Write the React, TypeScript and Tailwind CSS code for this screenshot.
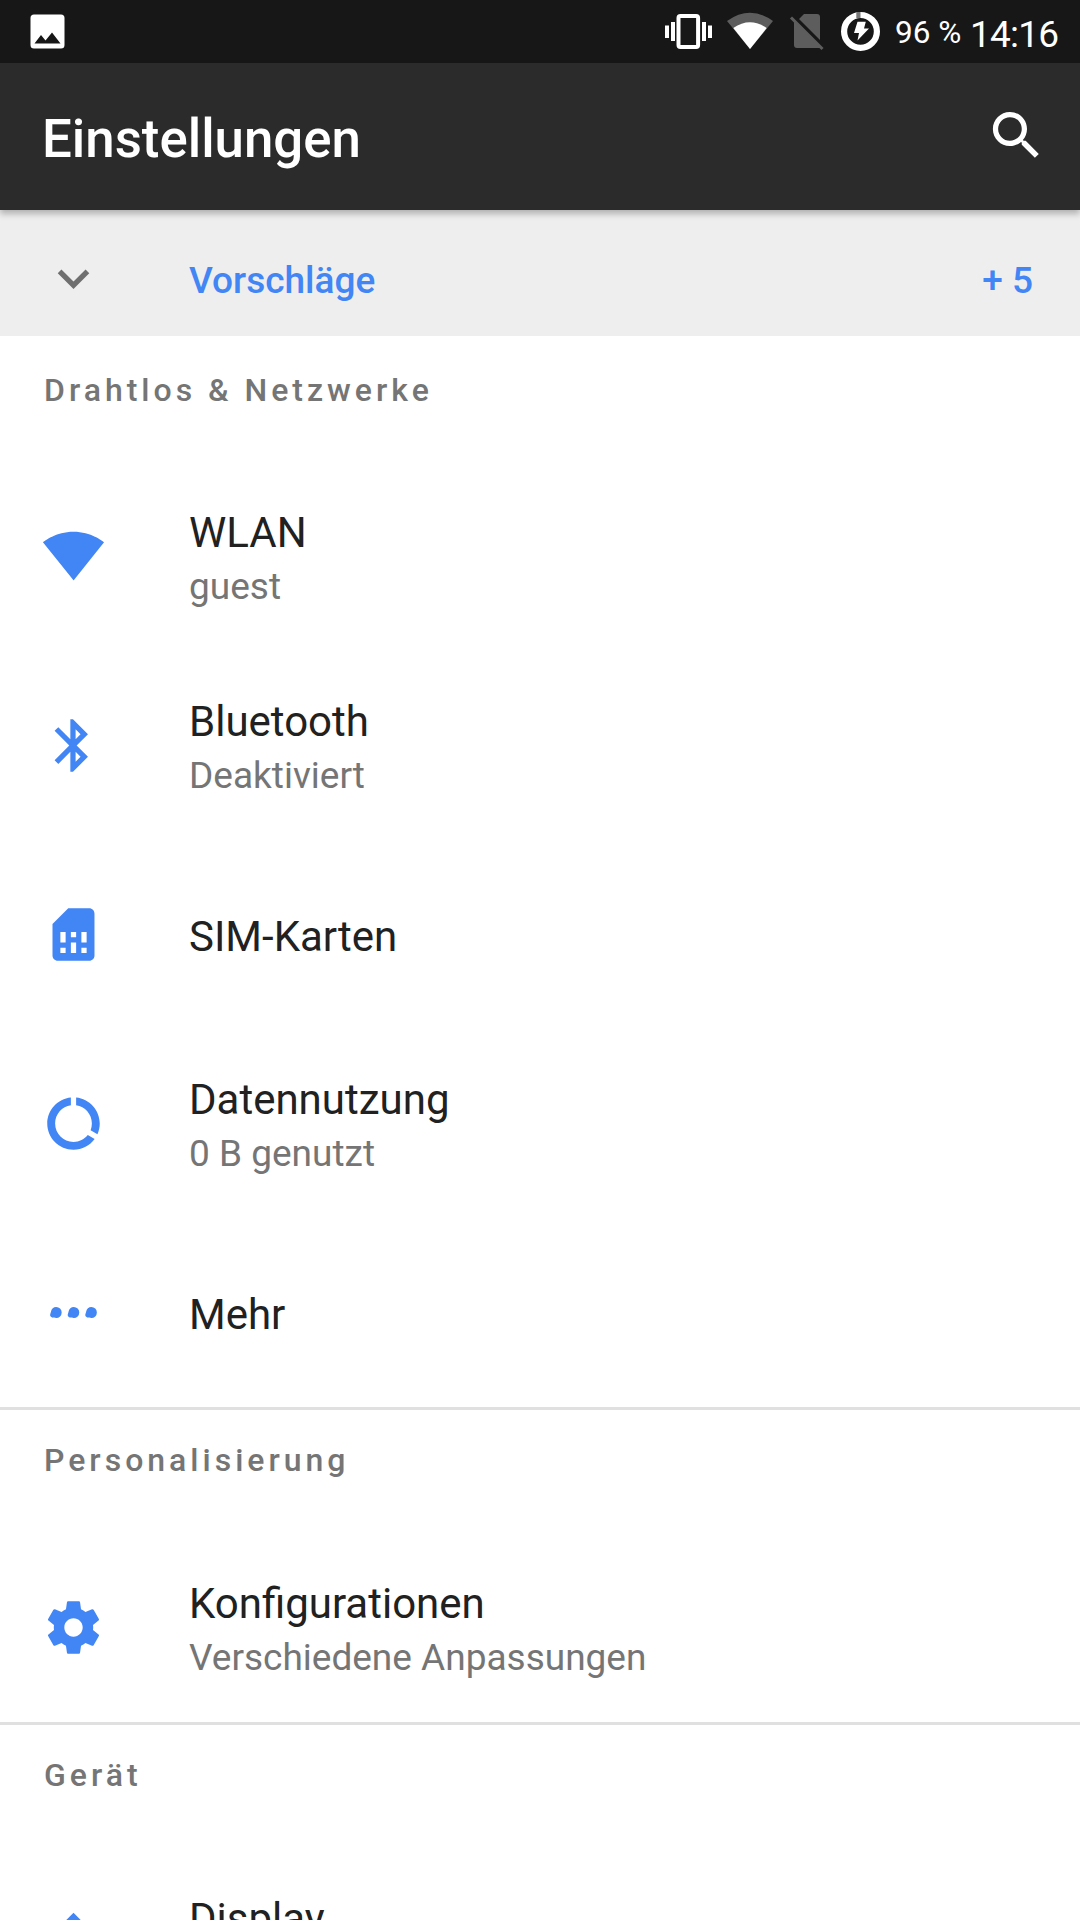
import type { ReactNode } from "react";

type IconProps = { d: string; className?: string };

function Icon({ d, className = "text-[#4285f4]" }: IconProps) {
  return (
    <svg viewBox="0 0 24 24" className={`size-[63px] shrink-0 ${className}`} fill="currentColor">
      <path d={d} />
    </svg>
  );
}

const paths = {
  search:
    "M15.5 14h-.79l-.28-.27C15.41 12.59 16 11.11 16 9.5 16 5.91 13.09 3 9.5 3S3 5.91 3 9.5 5.91 16 9.5 16c1.61 0 3.09-.59 4.23-1.57l.27.28v.79l5 4.99L20.49 19l-4.99-5zm-6 0C7.01 14 5 11.99 5 9.5S7.01 5 9.5 5 14 7.01 14 9.5 11.99 14 9.5 14z",
  expand: "M16.59 8.59L12 13.17 7.41 8.59 6 10l6 6 6-6z",
  wifi: "M12.01 21.1L23.64 6.6c-.45-.34-4.93-4-11.64-4C5.28 2.6.81 6.26.36 6.6l11.63 14.49.01.01.01-.01z",
  bluetooth:
    "M17.51 7.71L11.8 2h-1v7.59L6.21 5 4.8 6.41 10.39 12 4.8 17.59 6.21 19 10.8 14.41V22h1l5.71-5.71-4.3-4.29 4.3-4.29zM12.8 5.83l1.88 1.88L12.8 9.59V5.83zm1.88 10.46L12.8 18.17v-3.76l1.88 1.88z",
  sim: "M19.99 4c0-1.1-.89-2-1.99-2h-8L4 8v12c0 1.1.9 2 2 2h12.01c1.1 0 1.99-.9 1.99-2l-.01-16zM9 19H7v-2h2v2zm8 0h-2v-2h2v2zm-8-4H7v-4h2v4zm4 4h-2v-4h2v4zm0-6h-2v-2h2v2zm4 2h-2v-4h2v4z",
  data: "M13 2.05v3.03c3.39.49 6 3.39 6 6.92 0 .9-.18 1.75-.48 2.54l2.6 1.53c.56-1.24.88-2.62.88-4.07 0-5.18-3.95-9.45-9-9.95zM12 19c-3.87 0-7-3.13-7-7 0-3.53 2.61-6.43 6-6.92V2.05c-5.06.5-9 4.76-9 9.95 0 5.52 4.47 10 9.99 10 3.31 0 6.24-1.61 8.06-4.09l-2.6-1.53C16.17 17.98 14.21 19 12 19z",
  more: "M5.4 9.9a2.1 2.1 0 1 1 0 4.2c-1 0-2.3-.1-2.3-1.1 0-.5.2-.8.3-1.3.2-1.1 1-1.8 2-1.8zM12.1 9.9a2.1 2.1 0 1 1 0 4.2c-1 0-2.3-.1-2.3-1.1 0-.5.2-.8.3-1.3.2-1.1 1-1.8 2-1.8zM18.8 9.9a2.1 2.1 0 1 1 0 4.2c-1 0-2.3-.1-2.3-1.1 0-.5.2-.8.3-1.3.2-1.1 1-1.8 2-1.8z",
  settings:
    "M19.43 12.98c.04-.32.07-.64.07-.98s-.03-.66-.07-.98l2.11-1.65c.19-.15.24-.42.12-.64l-2-3.46c-.12-.22-.39-.3-.61-.22l-2.49 1c-.52-.4-1.08-.73-1.69-.98l-.38-2.65C14.46 2.18 14.25 2 14 2h-4c-.25 0-.46.18-.49.42l-.38 2.65c-.61.25-1.17.59-1.69.98l-2.49-1c-.23-.09-.49 0-.61.22l-2 3.46c-.13.22-.07.49.12.64l2.11 1.65c-.04.32-.07.65-.07.98s.03.66.07.98l-2.11 1.65c-.19.15-.24.42-.12.64l2 3.46c.12.22.39.3.61.22l2.49-1c.52.4 1.08.73 1.69.98l.38 2.65c.03.24.24.42.49.42h4c.25 0 .46-.18.49-.42l.38-2.65c.61-.25 1.17-.59 1.69-.98l2.49 1c.23.09.49 0 .61-.22l2-3.46c.12-.22.07-.49-.12-.64l-2.11-1.65zM12 15.5c-1.93 0-3.5-1.57-3.5-3.5s1.57-3.5 3.5-3.5 3.5 1.57 3.5 3.5-1.57 3.5-3.5 3.5z",
  display:
    "M20 15.31L23.31 12 20 8.69V4h-4.69L12 .69 8.69 4H4v4.69L.69 12 4 15.31V20h4.69L12 23.31 15.31 20H20v-4.69zM12 18c-3.31 0-6-2.69-6-6s2.69-6 6-6 6 2.69 6 6-2.69 6-6 6z",
};

const sections = [
  {
    title: "Drahtlos & Netzwerke",
    items: [
      { icon: paths.wifi, label: "WLAN", summary: "guest" },
      { icon: paths.bluetooth, label: "Bluetooth", summary: "Deaktiviert" },
      { icon: paths.sim, label: "SIM-Karten" },
      { icon: paths.data, label: "Datennutzung", summary: "0 B genutzt" },
      { icon: paths.more, label: "Mehr" },
    ],
  },
  {
    title: "Personalisierung",
    items: [{ icon: paths.settings, label: "Konfigurationen", summary: "Verschiedene Anpassungen" }],
  },
  {
    title: "Gerät",
    items: [{ icon: paths.display, label: "Display", summary: "\u00a0" }],
  },
];

function StatusBar() {
  return (
    <div className="flex h-[63px] shrink-0 items-center bg-[#171717] pl-[30px] pr-5 text-white">
      <svg viewBox="0 0 36 36" className="size-9" fill="currentColor">
        <path
          fillRule="evenodd"
          d="M4 .5h27a3.5 3.5 0 0 1 3.5 3.5v27a3.5 3.5 0 0 1-3.5 3.5H4A3.5 3.5 0 0 1 .5 31V4A3.5 3.5 0 0 1 4 .5zM4.5 29.5h26l-8.5-11-6.5 8-4.5-5.5z"
        />
      </svg>
      <svg viewBox="0 0 230 63" className="ml-auto h-[63px] w-[230px] shrink-0" fill="currentColor">
        {/* vibrate */}
        <path d="M5 25.5h4v12.5H5zM11 22h4v19h-4zM42 22h4v19h-4zM48 25.5h4v12.5h-4z" />
        <rect x="18.5" y="16" width="19.6" height="31" rx="2" fill="none" stroke="currentColor" strokeWidth="4" />
        {/* wifi level */}
        <path d="M90 49L67 21Q90 4.5 113 21z" fill="#5d5d5d" />
        <path d="M90 49L73.3 28Q90 16.5 106.7 28z" />
        {/* no sim */}
        <path d="M134 20.5V45q0 3 3 3h24.5zM139 19l5-5h13q3 0 3 3v23z" fill="#5d5d5d" />
        <path d="M131 17.5l31.5 31.5" stroke="#5d5d5d" strokeWidth="3" />
        {/* battery */}
        <circle cx="200.5" cy="31.4" r="16.4" fill="none" stroke="currentColor" strokeWidth="6.2" />
        <path d="M196.3 12h4.2v6h-4.2z" fill="#777" />
        <path d="M197.5 21.8h8.3l-1.8 6.7h5l-11.5 12 1.5-7.500h-5z" />
      </svg>
      <span className="ml-[5px] w-[75px] pt-[3px] text-[31.5px] leading-none whitespace-nowrap">96 %</span>
      <span className="w-[90px] pt-[5px] text-[37px] leading-none tracking-[-0.8px]">14:16</span>
    </div>
  );
}

function AppBar() {
  return (
    <header className="relative z-10 flex h-[147px] shrink-0 items-center justify-between bg-[#2b2b2b] pl-[42px] pr-8 text-white shadow-[0_4px_6px_rgba(0,0,0,0.25)]">
      <h1 className="pt-[5px] text-[52.8px] font-medium leading-none">Einstellungen</h1>
      <Icon d={paths.search} className="mb-[2px] text-white" />
    </header>
  );
}

function Row({ icon, children }: { icon: string; children: ReactNode }) {
  return (
    <li className="flex h-[189px] items-center pl-[42px]">
      <Icon d={icon} />
      <div className="ml-[84px] pt-[3px]">{children}</div>
    </li>
  );
}

export default function App() {
  return (
    <div className="flex h-[1920px] w-[1080px] flex-col overflow-hidden bg-white font-['Roboto',sans-serif]">
      <StatusBar />
      <AppBar />
      <div className="flex h-[126px] shrink-0 items-center bg-[#eeeeee] pl-[42px] pr-[47px] pt-[11px] text-[37px] font-medium text-[#4285f4]">
        <Icon d={paths.expand} className="text-[#6f6f6f]" />
        <span className="ml-[84px] pt-1 leading-none">Vorschläge</span>
        <span className="ml-auto pt-1 leading-none">+ 5</span>
      </div>
      {sections.map((section, i) => (
        <section key={section.title} className="shrink-0">
          <h2
            className={`h-[126px] pl-[44px] text-[32px] font-medium leading-[37px] tracking-[4px] text-[#757575] ${
              i > 0 ? "border-t-[3px] border-[#e0e0e0] pt-8" : "pt-9"
            }`}
          >
            {section.title}
          </h2>
          <ul>
            {section.items.map((item) => (
              <Row key={item.label} icon={item.icon}>
                <div className="text-[42px] leading-[49px] text-[#212121]">{item.label}</div>
                {item.summary && <div className="-mb-[2px] mt-[5px] text-[37px] leading-[49px] text-[#757575]">{item.summary}</div>}
              </Row>
            ))}
          </ul>
        </section>
      ))}
    </div>
  );
}
